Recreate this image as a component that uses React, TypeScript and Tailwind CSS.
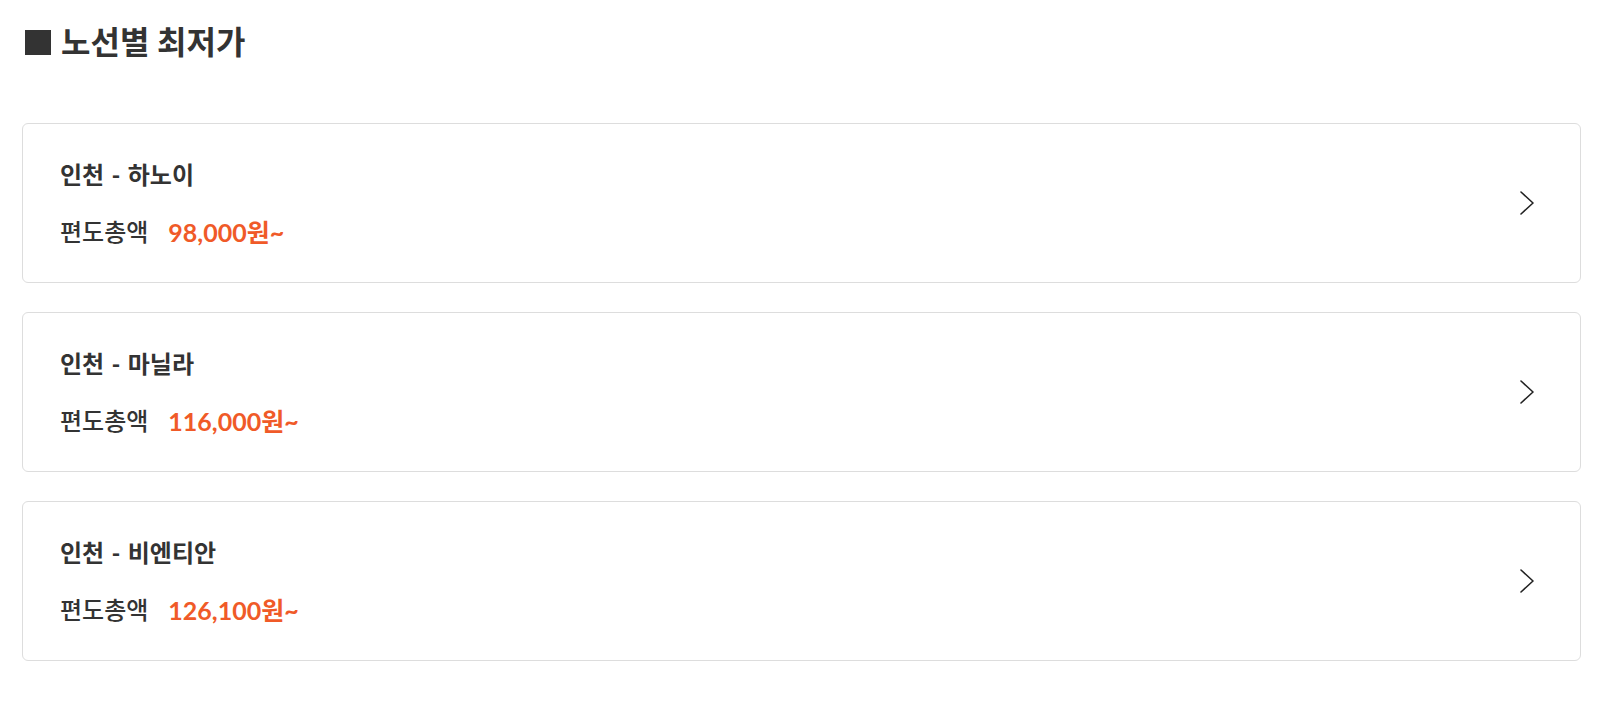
import * as React from 'react';

const routes = [
  { name: '인천 - 하노이', price: '98,000원~' },
  { name: '인천 - 마닐라', price: '116,000원~' },
  { name: '인천 - 비엔티안', price: '126,100원~' },
];

function Chevron() {
  return (
    <svg width="16" height="26" viewBox="0 0 16 26" fill="none" className="shrink-0">
      <polyline points="2,2 14,13 2,24" stroke="#222" strokeWidth="1.6" strokeLinecap="round" strokeLinejoin="round" />
    </svg>
  );
}

/**
 * 노선별 최저가 목록
 */
export default function App() {
  return (
    <div
      className="min-h-screen bg-white pl-[22px] pr-[17px] pt-[20px] text-[#333]"
      style={{ fontFamily: 'Lato, "Noto Sans CJK KR", sans-serif' }}
    >
      <h2 className="flex items-center text-[32px] font-bold leading-[44px]">
        <span className="mr-[10px] ml-[3px] inline-block h-[25px] w-[26px] bg-[#333]" />
        노선별 최저가
      </h2>

      <div className="mt-[59px] flex flex-col gap-[29px]">
        {routes.map((r) => (
          <div
            key={r.name}
            className="flex h-[160px] items-center justify-between rounded-[6px] border border-[#dddddd] pl-[37px] pr-[45px]"
          >
            <div className="flex flex-col gap-[23px]">
              <div className="text-[24px] font-bold leading-[34px] [word-spacing:1.5px]">{r.name}</div>
              <div className="flex items-center text-[24px] leading-[34px]">
                <span className="font-medium">편도총액</span>
                <span className="ml-[20px] text-[25px] font-bold text-[#f05a28]">{r.price}</span>
              </div>
            </div>
            <Chevron />
          </div>
        ))}
      </div>
    </div>
  );
}
